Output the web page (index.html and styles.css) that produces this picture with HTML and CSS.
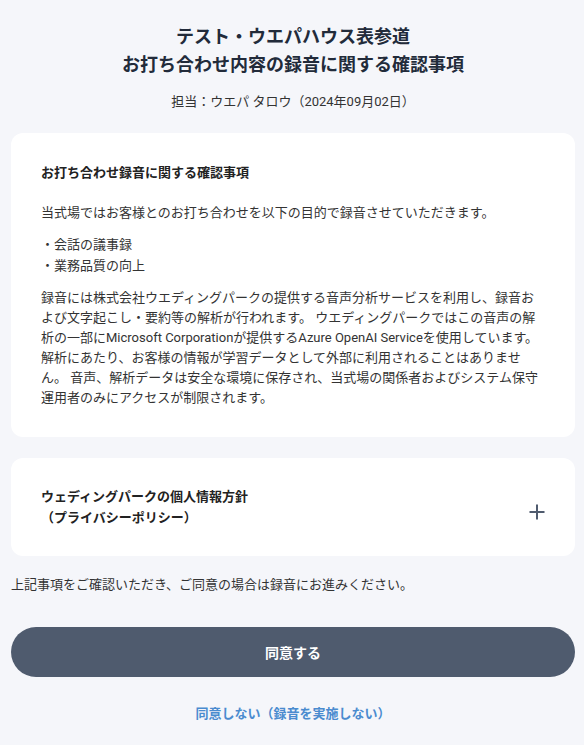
FILE: index.html
```html
<!DOCTYPE html>
<html lang="ja">
<head>
  <meta charset="UTF-8" />
  <meta name="viewport" content="width=device-width, initial-scale=1" />
  <link rel="stylesheet" href="styles.css">
</head>
<body>

  <div class="page">
    <header class="header">
      <h1 class="title">テスト・ウエパハウス表参道<br>お打ち合わせ内容の録音に関する確認事項</h1>
      <p class="staff">担当：ウエパ タロウ（2024年09月02日）</p>
    </header>

    <section class="card">
      <h2 class="card-title">お打ち合わせ録音に関する確認事項</h2>
      <p class="text">当式場ではお客様とのお打ち合わせを以下の目的で録音させていただきます。</p>
      <ul class="list">
        <li>・会話の議事録</li>
        <li>・業務品質の向上</li>
      </ul>
      <p class="text">録音には株式会社ウエディングパークの提供する音声分析サービスを利用し、録音および文字起こし・要約等の解析が行われます。 ウエディングパークではこの音声の解析の一部にMicrosoft Corporationが提供するAzure OpenAI Serviceを使用しています。解析にあたり、お客様の情報が学習データとして外部に利用されることはありません。 音声、解析データは安全な環境に保存され、当式場の関係者およびシステム保守運用者のみにアクセスが制限されます。</p>
    </section>

    <section class="card accordion">
      <h2 class="card-title">ウェディングパークの個人情報方針<br>（プライバシーポリシー）</h2>
      <svg class="plus" width="16" height="16" viewBox="0 0 16 16">
        <path d="M8 0.5v15M0.5 8h15" stroke="#4f5b6e" stroke-width="2" fill="none"/>
      </svg>
    </section>

    <p class="note">上記事項をご確認いただき、ご同意の場合は録音にお進みください。</p>

    <button class="agree">同意する</button>
    <a class="decline" href="#">同意しない（録音を実施しない）</a>
  </div>

</body>
</html>
```

FILE: styles.css
```css
html, body {
  margin: 0;
  padding: 0;
  background: #f5f6fa;
  font-family: Roboto, "Noto Sans CJK JP", sans-serif;
  color: #333;
}

.page {
  padding: 23px 9px 20px 11px;
  display: flex;
  flex-direction: column;
}

.header {
  text-align: center;
}

.title {
  margin: 0;
  font-size: 18px;
  line-height: 28px;
  font-weight: 700;
  color: #222b3a;
}

.staff {
  margin: 13px 0 0;
  font-size: 13px;
  line-height: 20px;
  color: #333;
}

.card {
  margin-top: 21px;
  background: #fff;
  border-radius: 12px;
  padding: 30px 30px 29px;
}

.card-title {
  margin: 0;
  font-size: 13px;
  line-height: 20px;
  font-weight: 700;
  color: #222;
}

.text {
  margin: 12px 0 0;
  font-size: 13px;
  line-height: 20px;
}

.card-title + .text {
  margin-top: 20px;
}

.list {
  list-style: none;
  margin: 11px 0 0;
  padding: 0;
  font-size: 13px;
  line-height: 21px;
}

.accordion {
  display: flex;
  align-items: center;
  justify-content: space-between;
  padding: 28px 30px 28px;
  margin-top: 21px;
}

.accordion .card-title {
  line-height: 21px;
}

.plus {
  margin-top: 10px;
}

.note {
  margin: 19px 0 0;
  font-size: 13px;
  line-height: 20px;
}

.agree {
  margin-top: 32px;
  height: 50px;
  border: none;
  border-radius: 25px;
  background: #4f5b6e;
  color: #fff;
  font-family: inherit;
  font-size: 14px;
  font-weight: 700;
  cursor: pointer;
}

.decline {
  margin-top: 27px;
  align-self: center;
  font-size: 13px;
  line-height: 20px;
  font-weight: 700;
  color: #4a8bcf;
  text-decoration: none;
}
```
